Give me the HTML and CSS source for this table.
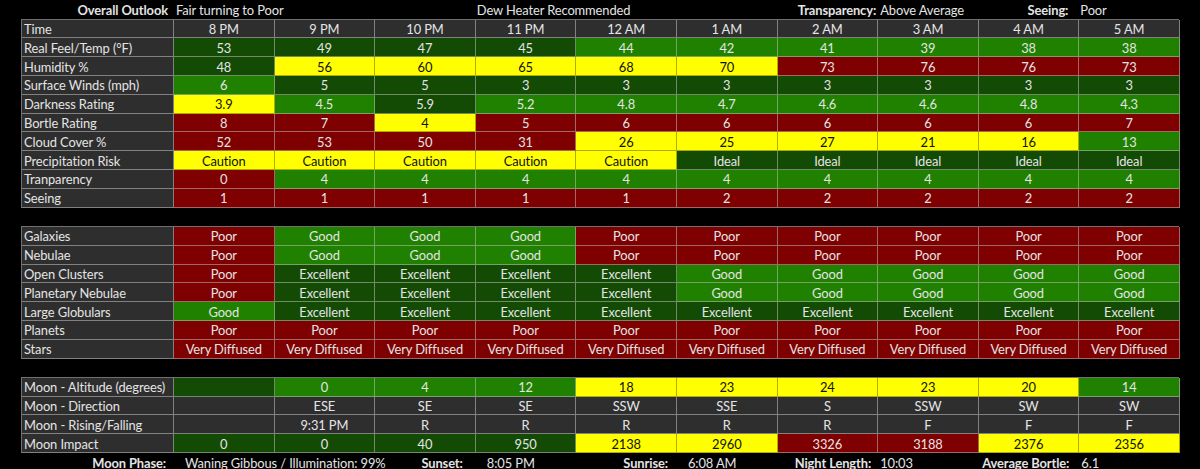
FILE: index.html
```html
<!DOCTYPE html>
<html>
<head>
<meta charset="utf-8">
<link rel="stylesheet" href="styles.css">
</head>
<body>
<div class="page">
  <div class="band title">
    <div class="t-lab b pr5">Overall Outlook</div>
    <div class="t-val s3 pl3">Fair turning to Poor</div>
    <div class="t-val s3 pl2">Dew Heater Recommended</div>
    <div class="t-lab b pr1">Transparency:</div>
    <div class="t-val pl3">Above Average</div>
    <div class="t-lab b pr10">Seeing:</div>
    <div class="t-val pl2">Poor</div>
  </div>

  <div class="sheet">
    <div class="lbl">Time</div><div class="c k">8 PM</div><div class="c k">9 PM</div><div class="c k">10 PM</div><div class="c k">11 PM</div><div class="c k">12 AM</div><div class="c k">1 AM</div><div class="c k">2 AM</div><div class="c k">3 AM</div><div class="c k">4 AM</div><div class="c k">5 AM</div>
    <div class="lbl">Real Feel/Temp (°F)</div><div class="c d">53</div><div class="c d">49</div><div class="c d">47</div><div class="c d">45</div><div class="c g">44</div><div class="c g">42</div><div class="c g">41</div><div class="c g">39</div><div class="c g">38</div><div class="c g">38</div>
    <div class="lbl">Humidity %</div><div class="c d">48</div><div class="c y">56</div><div class="c y">60</div><div class="c y">65</div><div class="c y">68</div><div class="c y">70</div><div class="c r">73</div><div class="c r">76</div><div class="c r">76</div><div class="c r">73</div>
    <div class="lbl">Surface Winds (mph)</div><div class="c g">6</div><div class="c d">5</div><div class="c d">5</div><div class="c d">3</div><div class="c d">3</div><div class="c d">3</div><div class="c d">3</div><div class="c d">3</div><div class="c d">3</div><div class="c d">3</div>
    <div class="lbl">Darkness Rating</div><div class="c y">3.9</div><div class="c g">4.5</div><div class="c d">5.9</div><div class="c g">5.2</div><div class="c g">4.8</div><div class="c g">4.7</div><div class="c g">4.6</div><div class="c g">4.6</div><div class="c g">4.8</div><div class="c g">4.3</div>
    <div class="lbl">Bortle Rating</div><div class="c r">8</div><div class="c r">7</div><div class="c y">4</div><div class="c r">5</div><div class="c r">6</div><div class="c r">6</div><div class="c r">6</div><div class="c r">6</div><div class="c r">6</div><div class="c r">7</div>
    <div class="lbl">Cloud Cover %</div><div class="c r">52</div><div class="c r">53</div><div class="c r">50</div><div class="c r">31</div><div class="c y">26</div><div class="c y">25</div><div class="c y">27</div><div class="c y">21</div><div class="c y">16</div><div class="c g">13</div>
    <div class="lbl">Precipitation Risk</div><div class="c y">Caution</div><div class="c y">Caution</div><div class="c y">Caution</div><div class="c y">Caution</div><div class="c y">Caution</div><div class="c d">Ideal</div><div class="c d">Ideal</div><div class="c d">Ideal</div><div class="c d">Ideal</div><div class="c d">Ideal</div>
    <div class="lbl">Tranparency</div><div class="c r">0</div><div class="c g">4</div><div class="c g">4</div><div class="c g">4</div><div class="c g">4</div><div class="c g">4</div><div class="c g">4</div><div class="c g">4</div><div class="c g">4</div><div class="c g">4</div>
    <div class="lbl">Seeing</div><div class="c r">1</div><div class="c r">1</div><div class="c r">1</div><div class="c r">1</div><div class="c r">1</div><div class="c r">2</div><div class="c r">2</div><div class="c r">2</div><div class="c r">2</div><div class="c r">2</div>
  </div>

  <div class="sheet gap">
    <div class="lbl">Galaxies</div><div class="c r">Poor</div><div class="c g">Good</div><div class="c g">Good</div><div class="c g">Good</div><div class="c r">Poor</div><div class="c r">Poor</div><div class="c r">Poor</div><div class="c r">Poor</div><div class="c r">Poor</div><div class="c r">Poor</div>
    <div class="lbl">Nebulae</div><div class="c r">Poor</div><div class="c g">Good</div><div class="c g">Good</div><div class="c g">Good</div><div class="c r">Poor</div><div class="c r">Poor</div><div class="c r">Poor</div><div class="c r">Poor</div><div class="c r">Poor</div><div class="c r">Poor</div>
    <div class="lbl">Open Clusters</div><div class="c r">Poor</div><div class="c d">Excellent</div><div class="c d">Excellent</div><div class="c d">Excellent</div><div class="c d">Excellent</div><div class="c g">Good</div><div class="c g">Good</div><div class="c g">Good</div><div class="c g">Good</div><div class="c g">Good</div>
    <div class="lbl">Planetary Nebulae</div><div class="c r">Poor</div><div class="c d">Excellent</div><div class="c d">Excellent</div><div class="c d">Excellent</div><div class="c d">Excellent</div><div class="c g">Good</div><div class="c g">Good</div><div class="c g">Good</div><div class="c g">Good</div><div class="c g">Good</div>
    <div class="lbl">Large Globulars</div><div class="c g">Good</div><div class="c d">Excellent</div><div class="c d">Excellent</div><div class="c d">Excellent</div><div class="c d">Excellent</div><div class="c d">Excellent</div><div class="c d">Excellent</div><div class="c d">Excellent</div><div class="c d">Excellent</div><div class="c d">Excellent</div>
    <div class="lbl">Planets</div><div class="c r">Poor</div><div class="c r">Poor</div><div class="c r">Poor</div><div class="c r">Poor</div><div class="c r">Poor</div><div class="c r">Poor</div><div class="c r">Poor</div><div class="c r">Poor</div><div class="c r">Poor</div><div class="c r">Poor</div>
    <div class="lbl">Stars</div><div class="c r">Very Diffused</div><div class="c r">Very Diffused</div><div class="c r">Very Diffused</div><div class="c r">Very Diffused</div><div class="c r">Very Diffused</div><div class="c r">Very Diffused</div><div class="c r">Very Diffused</div><div class="c r">Very Diffused</div><div class="c r">Very Diffused</div><div class="c r">Very Diffused</div>
  </div>

  <div class="sheet gap">
    <div class="lbl">Moon - Altitude (degrees)</div><div class="c d"></div><div class="c g">0</div><div class="c g">4</div><div class="c g">12</div><div class="c y">18</div><div class="c y">23</div><div class="c y">24</div><div class="c y">23</div><div class="c y">20</div><div class="c g">14</div>
    <div class="lbl">Moon - Direction</div><div class="c k"></div><div class="c k">ESE</div><div class="c k">SE</div><div class="c k">SE</div><div class="c k">SSW</div><div class="c k">SSE</div><div class="c k">S</div><div class="c k">SSW</div><div class="c k">SW</div><div class="c k">SW</div>
    <div class="lbl">Moon - Rising/Falling</div><div class="c k"></div><div class="c k">9:31 PM</div><div class="c k">R</div><div class="c k">R</div><div class="c k">R</div><div class="c k">R</div><div class="c k">R</div><div class="c k">F</div><div class="c k">F</div><div class="c k">F</div>
    <div class="lbl">Moon Impact</div><div class="c d">0</div><div class="c d">0</div><div class="c d">40</div><div class="c d">950</div><div class="c y">2138</div><div class="c y">2960</div><div class="c r">3326</div><div class="c r">3188</div><div class="c y">2376</div><div class="c y">2356</div>
  </div>

  <div class="band foot">
    <div class="t-lab b pr7">Moon Phase:</div>
    <div class="t-val s2 pl12">Waning Gibbous / Illumination: 99%</div>
    <div class="t-lab b pr12">Sunset:</div>
    <div class="t-val pl12">8:05 PM</div>
    <div class="t-lab b pr8">Sunrise:</div>
    <div class="t-val pl12">6:08 AM</div>
    <div class="t-lab b pr6">Night Length:</div>
    <div class="t-val pl3">10:03</div>
    <div class="t-lab b pr9">Average Bortle:</div>
    <div class="t-val pl3">6.1</div>
  </div>
</div>
</body>
</html>
```

FILE: styles.css
```css
* { box-sizing: border-box; }
html, body { margin: 0; padding: 0; background: #000; }
body {
  width: 1200px;
  height: 469px;
  overflow: hidden;
  font-family: Lato, "Liberation Sans", sans-serif;
  font-size: 12.9px;
  letter-spacing: -0.1px;
  color: #e4e4e4;
}
.page {
  padding-left: 21px;
}
.band, .sheet {
  display: grid;
  grid-template-columns: 152px repeat(10, 100.6px);
  width: 1158px;
}
.band {
  height: 18.76px;
  align-items: center;
  white-space: nowrap;
}
.band > div { line-height: 18.76px; padding-top: 1px; }
.title { height: 18.7px; }
.foot { height: 18.76px; }
.b { font-weight: 700; }
.t-lab { text-align: right; }
.t-val { text-align: left; }
.s2 { grid-column: span 2; }
.s3 { grid-column: span 3; }
.pr1 { padding-right: 1px; }
.pr5 { padding-right: 5px; }
.pr6 { padding-right: 6px; }
.pr7 { padding-right: 7px; }
.pr8 { padding-right: 8px; }
.pr9 { padding-right: 9px; }
.pr10 { padding-right: 10px; }
.pr12 { padding-right: 12px; }
.pl1 { padding-left: 1px; }
.pl2 { padding-left: 2px; }
.pl3 { padding-left: 3px; }
.pl12 { padding-left: 12px; }

.sheet {
  grid-auto-rows: 18.8px;
  border-top: 1px solid rgba(150,150,150,0.75);
  border-left: 1px solid rgba(150,150,150,0.75);
}
.sheet.gap { margin-top: 18.3px; }
.sheet > div {
  border-right: 1px solid rgba(190,190,190,0.55);
  border-bottom: 1px solid rgba(190,190,190,0.55);
  white-space: nowrap;
  overflow: hidden;
  display: flex;
  align-items: center;
  padding-top: 1px;
}
.lbl {
  background: #2e2e2e;
  padding-left: 2px;
  color: #e4e4e4;
  border-color: rgba(150,150,150,0.8) !important;
}
.c { justify-content: center; }
.k { background: #2e2e2e; border-color: rgba(150,150,150,0.8) !important; }
.r { background: #7e0000; }
.g { background: #208000; }
.d { background: #134a04; }
.y { background: #ffff00; color: #111; border-color: rgba(120,120,0,0.6) !important; }
```
